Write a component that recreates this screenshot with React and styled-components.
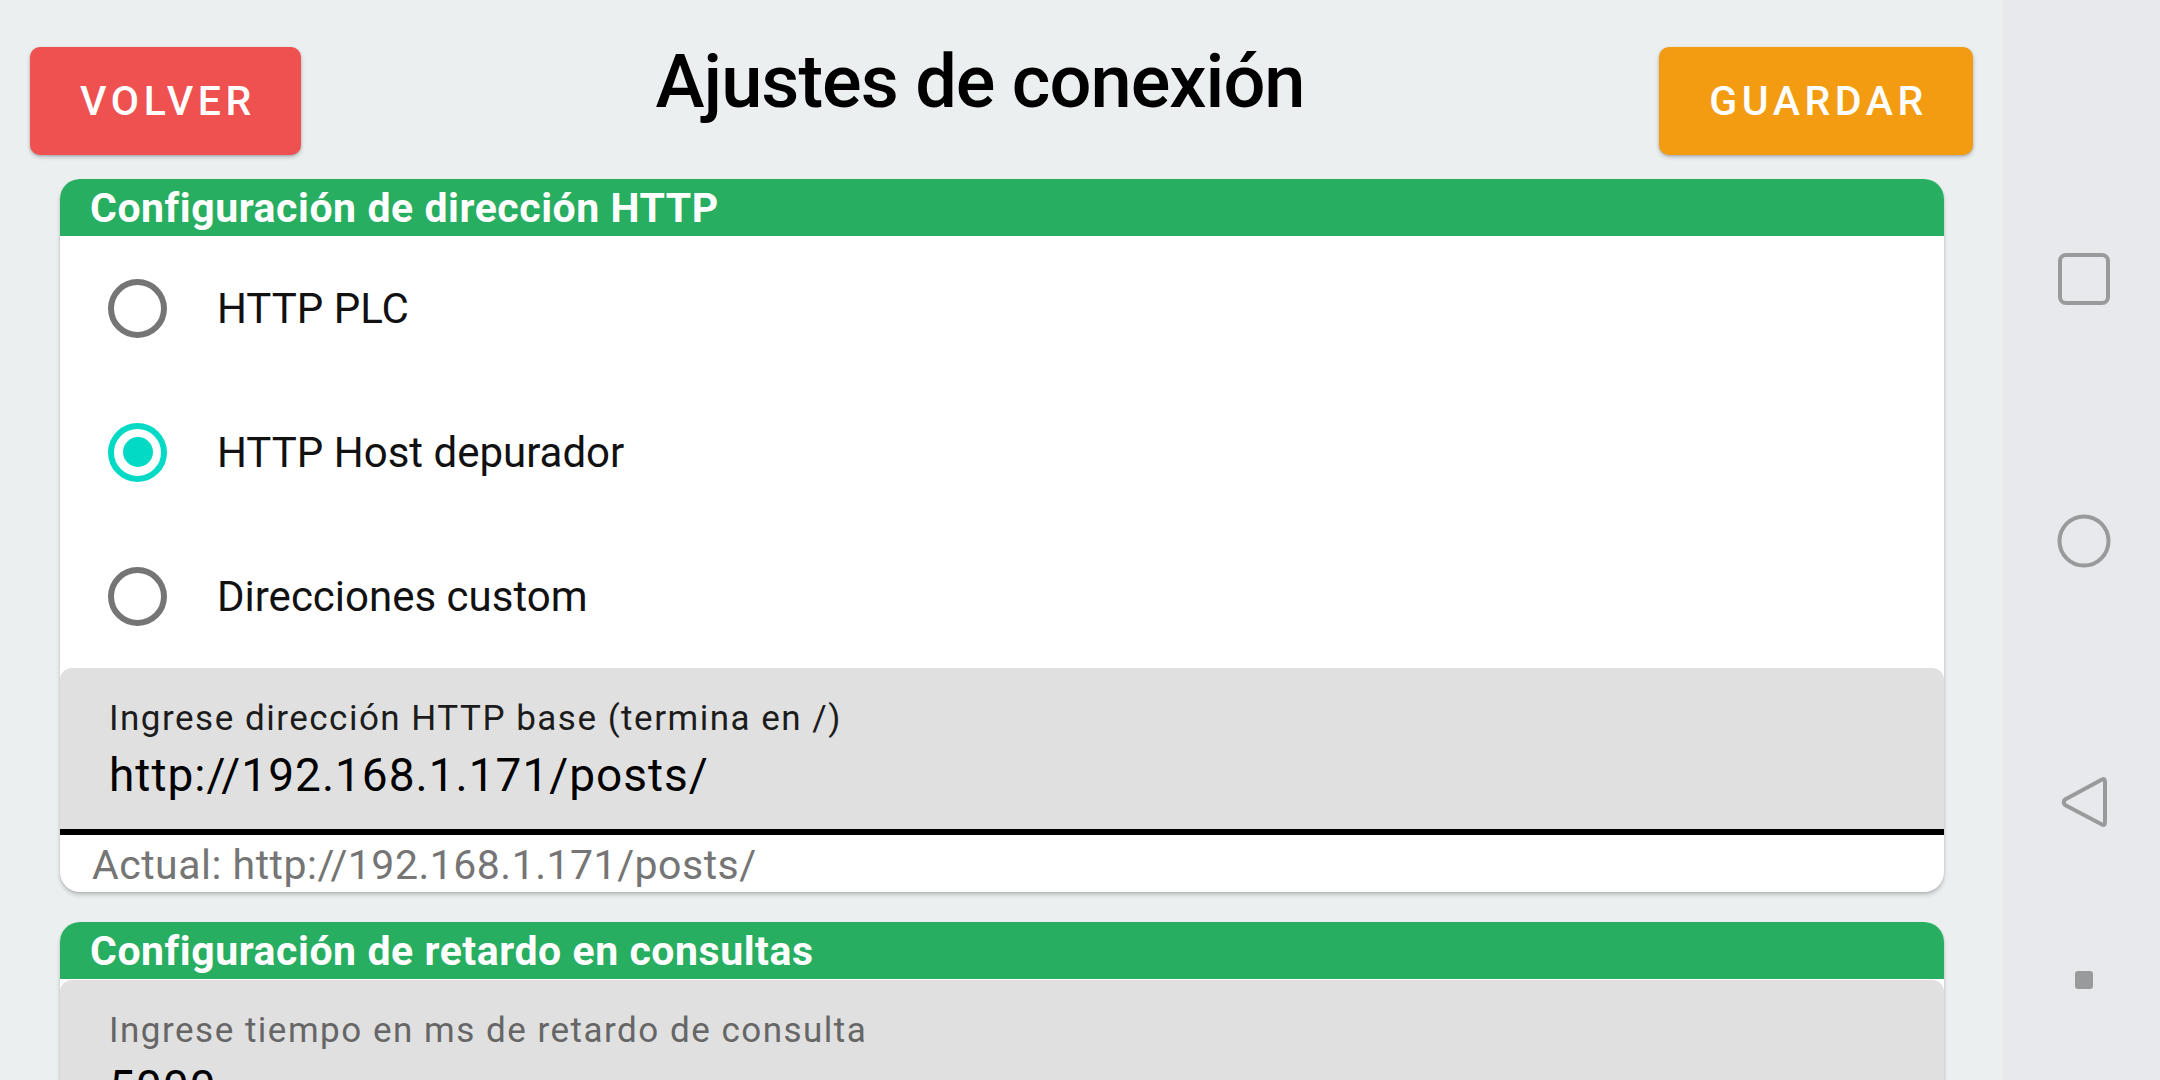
import React from "react";
import styled, { createGlobalStyle } from "styled-components";

const GlobalStyle = createGlobalStyle`
  html, body { margin: 0; padding: 0; }
  body {
    background: #ebeff0;
    font-family: Roboto, "Noto Sans", "Liberation Sans", sans-serif;
    -webkit-font-smoothing: antialiased;
  }
`;

const Screen = styled.div`
  display: flex;
  width: 2160px;
  height: 1080px;
  overflow: hidden;
  background: #ebeff0;
`;

const Main = styled.main`
  flex: 1;
  display: flex;
  flex-direction: column;
  min-width: 0;
`;

const TopBar = styled.header`
  display: flex;
  align-items: flex-start;
  height: 155px;
  padding: 36px 30px 0;
  box-sizing: border-box;
`;

const ActionButton = styled.button`
  margin-top: 11px;
  height: 108px;
  padding: 0 45px 0 50px;
  border: none;
  border-radius: 10px;
  background: ${(p) => p.$color};
  color: #fff;
  font-family: Roboto, sans-serif;
  font-weight: 500;
  font-size: 41px;
  letter-spacing: 4.6px;
  text-transform: uppercase;
  box-shadow: 0 2px 4px rgba(0, 0, 0, 0.22), 0 1px 2px rgba(0, 0, 0, 0.12);
  cursor: pointer;
`;

const Title = styled.h1`
  flex: 1;
  margin: 0;
  text-align: center;
  font-family: Roboto, sans-serif;
  font-weight: 500;
  font-size: 74px;
  letter-spacing: -1px;
  color: #000;
  line-height: normal;
  padding-top: 2px;
`;

const Cards = styled.div`
  display: flex;
  flex-direction: column;
  gap: 30px;
  padding: 24px 59px 0 60px;
`;

const Card = styled.section`
  background: #fff;
  border-radius: 20px;
  overflow: hidden;
  box-shadow: 0 3px 4px rgba(0, 0, 0, 0.18), 0 1px 2px rgba(0, 0, 0, 0.1);
  flex-shrink: 0;
`;

const CardHeader = styled.div`
  height: 57px;
  display: flex;
  align-items: center;
  padding-left: 30px;
  background: #27ae60;
  color: #fff;
  font-weight: 700;
  font-size: 41px;
  letter-spacing: 0.55px;
`;

const RadioRow = styled.label`
  height: 144px;
  display: flex;
  align-items: center;
  gap: 50px;
  padding-left: 48px;
  font-size: 42px;
  color: #111;
  cursor: pointer;
`;

const RadioCircle = styled.span`
  width: 59px;
  height: 59px;
  box-sizing: border-box;
  border-radius: 50%;
  border: 6px solid ${(p) => (p.$checked ? "#03dac6" : "#757575")};
  display: flex;
  align-items: center;
  justify-content: center;
  flex-shrink: 0;

  &::after {
    content: "";
    width: 30px;
    height: 30px;
    border-radius: 50%;
    background: #03dac6;
    display: ${(p) => (p.$checked ? "block" : "none")};
  }
`;

const Field = styled.div`
  background: #e0e0e0;
  border-radius: 12px 12px 0 0;
  border-bottom: ${(p) => (p.$open ? "none" : "6px solid #000")};
  padding: 30px 0 0 49px;
  box-sizing: border-box;
  height: ${(p) => (p.$open ? "120px" : "167px")};
  margin-top: ${(p) => (p.$gap ? "1px" : "0")};
`;

const FieldLabel = styled.div`
  font-size: 35px;
  color: ${(p) => (p.$muted ? "#666" : "#1c1c1c")};
  letter-spacing: 1.5px;
`;

const FieldValue = styled.div`
  margin-top: 9px;
  font-size: 46px;
  letter-spacing: 1px;
  color: #000;
`;

const Helper = styled.div`
  height: 57px;
  box-sizing: border-box;
  padding: 6px 0 0 32px;
  font-size: 41px;
  letter-spacing: 0.5px;
  color: #757575;
`;

const NavBar = styled.nav`
  width: 157px;
  flex-shrink: 0;
  background: #e8e9ec;
  display: flex;
  flex-direction: column;
  align-items: center;
  padding-top: 253px;
  box-sizing: border-box;
`;

const NavIcon = styled.svg`
  display: block;
  margin-top: ${(p) => p.$mt || 0}px;
  margin-left: 4px;
`;

const options = ["HTTP PLC", "HTTP Host depurador", "Direcciones custom"];

export default function App() {
  const selected = 1;
  return (
    <>
      <GlobalStyle />
      <Screen>
        <Main>
          <TopBar>
            <ActionButton $color="#ef5050">Volver</ActionButton>
            <Title>Ajustes de conexión</Title>
            <ActionButton $color="#f39c12">Guardar</ActionButton>
          </TopBar>
          <Cards>
            <Card>
              <CardHeader>Configuración de dirección HTTP</CardHeader>
              {options.map((o, i) => (
                <RadioRow key={o}>
                  <RadioCircle $checked={i === selected} />
                  {o}
                </RadioRow>
              ))}
              <Field>
                <FieldLabel>Ingrese dirección HTTP base (termina en /)</FieldLabel>
                <FieldValue>http://192.168.1.171/posts/</FieldValue>
              </Field>
              <Helper>Actual: http://192.168.1.171/posts/</Helper>
            </Card>
            <Card>
              <CardHeader>Configuración de retardo en consultas</CardHeader>
              <Field $open $gap>
                <FieldLabel $muted>Ingrese tiempo en ms de retardo de consulta</FieldLabel>
                <FieldValue>5000</FieldValue>
              </Field>
            </Card>
          </Cards>
        </Main>
        <NavBar>
          <NavIcon width="52" height="52" viewBox="0 0 52 52">
            <rect x="2" y="2" width="48" height="48" rx="6" fill="none" stroke="#999a9c" strokeWidth="4" />
          </NavIcon>
          <NavIcon $mt={209} width="54" height="54" viewBox="0 0 54 54">
            <circle cx="27" cy="27" r="24.5" fill="none" stroke="#999a9c" strokeWidth="4" />
          </NavIcon>
          <NavIcon $mt={207} width="48" height="54" viewBox="0 0 48 54">
            <path
              d="M42 4.5 Q45 3 45 7 L45 47 Q45 51 42 49.5 L5 30 Q2.5 27 5 24.5 Z"
              fill="none"
              stroke="#999a9c"
              strokeWidth="4"
              strokeLinejoin="round"
            />
          </NavIcon>
          <NavIcon $mt={142} width="18" height="18" viewBox="0 0 18 18">
            <rect x="0" y="0" width="18" height="18" rx="3" fill="#999a9c" />
          </NavIcon>
        </NavBar>
      </Screen>
    </>
  );
}
